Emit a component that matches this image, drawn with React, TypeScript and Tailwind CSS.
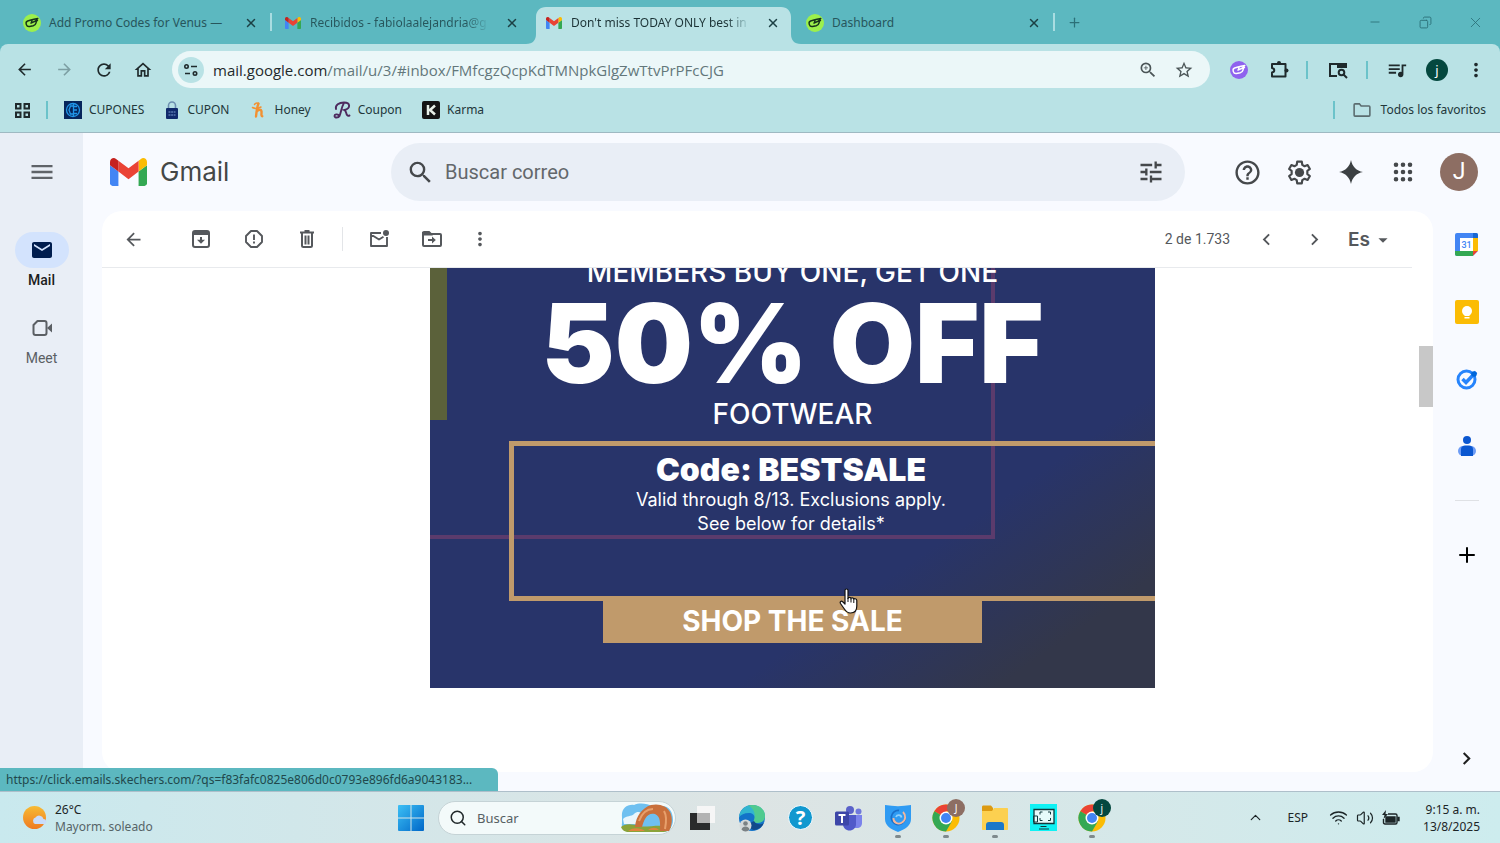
import type { ReactNode } from 'react';
import {
  MdArrowBack, MdArrowDropDown, MdArrowForward, MdChevronLeft, MdChevronRight,
  MdHelpOutline, MdMail, MdMenu, MdMoreVert, MdOutlineHome,
  MdQueueMusic, MdRefresh, MdSearch, MdStarOutline, MdTune, MdZoomIn,
} from 'react-icons/md';
import { ChevronUp, Copy, Minus, Plus, Search, Volume2, Wifi, X } from 'lucide-react';

function GmailLogo({ className }: { className?: string }) {
  return (
    <svg viewBox="52 42 88 66" className={className}>
      <path fill="#4285f4" d="M58 108h14V74L52 59v43c0 3.32 2.69 6 6 6" />
      <path fill="#34a853" d="M120 108h14c3.32 0 6-2.69 6-6V59l-20 15" />
      <path fill="#fbbc04" d="M120 48v26l20-15v-8c0-7.42-8.47-11.65-14.4-7.2" />
      <path fill="#ea4335" d="M72 74V48l24 18 24-18v26L96 92" />
      <path fill="#c5221f" d="M52 51v8l20 15V48l-5.6-4.2c-5.94-4.45-14.4-.22-14.4 7.2" />
    </svg>
  );
}

function HandTag({ bg, ink }: { bg: string; ink: string }) {
  return (
    <svg viewBox="0 0 18 18" className="size-[18px] shrink-0" fill="none">
      <circle cx="9" cy="9" r="9" fill={bg} />
      <path
        d="M8 6 4.600 7C3.200 7.500 2.800 9 3.300 10.500c.5 1.500 1.800 2.300 3.300 2l3.600-.7c1.500-.4 2.500-1.500 2.800-2.800l.5-2M8 6l3-.8 3.800-.7-2.300 2.500-4.500 2.200 1-2.500M13 7l1.500-.5"
        stroke={ink}
        strokeWidth="1.400"
        strokeLinecap="round"
        strokeLinejoin="round"
      />
    </svg>
  );
}

const tabs = [
  { title: 'Add Promo Codes for Venus —', icon: 'tag', divider: true },
  { title: 'Recibidos - fabiolaalejandria@g', icon: 'gmail' },
  { title: "Don't miss TODAY ONLY best in", icon: 'gmail', active: true },
  { title: 'Dashboard', icon: 'tag', divider: true },
];

function TabStrip() {
  return (
    <div className="flex h-[44px] shrink-0 items-stretch bg-[#5cb8c0] pl-[11px]">
      {tabs.map((tab) => (
        <div key={tab.title} className="relative flex w-[261px] shrink-0 items-center px-[3px] pt-[7px]">
          {tab.active && (
            <svg viewBox="0 0 275 37" className="absolute bottom-0 -left-[7px] h-[37px] w-[275px]">
              <path d="M0 37c7 0 10-4 10-10V10C10 4 14 0 20 0h235c6 0 10 4 10 10v17c0 6 3 10 10 10Z" fill="#b9e2e5" />
            </svg>
          )}
          <button className="relative flex min-w-0 flex-1 items-center gap-2 pb-[5px] pl-[9px] text-left">
            {tab.icon === 'gmail' ? (
              <GmailLogo className="h-3 w-[18px] shrink-0" />
            ) : (
              <HandTag bg="#9cf04c" ink="#16331b" />
            )}
            <span
              className={
                tab.active
                  ? 'bg-linear-to-r from-[#1c3336] from-88% to-[#9fcdd1] bg-clip-text text-[12px] leading-5 whitespace-nowrap text-transparent'
                  : tab.icon === 'gmail'
                    ? 'bg-linear-to-r from-[#27565c] from-88% to-[#57aeb6] bg-clip-text text-[12px] leading-5 whitespace-nowrap text-transparent'
                    : 'text-[12px] leading-5 whitespace-nowrap text-[#27565c]'
              }
            >
              {tab.title}
            </span>
          </button>
          <button aria-label="Cerrar" className="relative mr-[11px] mb-[5px] text-[#1c4045]">
            <X className="size-[14px]" strokeWidth={2.500} />
          </button>
          {tab.divider && <span className="absolute right-0 bottom-[13px] h-[18px] w-[2px] bg-[#a9dde1]" />}
        </div>
      ))}
      <button aria-label="Nueva pestaña" className="ml-3 text-[#2c7078]">
        <Plus className="size-[15px]" />
      </button>
      <div className="ml-auto flex items-center text-[#2c7078]">
        <button aria-label="Minimizar" className="flex w-[50px] justify-center"><Minus className="size-[14px]" strokeWidth={1.500} /></button>
        <button aria-label="Restaurar" className="flex w-[50px] justify-center">
          <Copy className="size-[13px] -scale-x-100" strokeWidth={1.700} />
        </button>
        <button aria-label="Cerrar ventana" className="flex w-[50px] justify-center"><X className="size-[17px]" strokeWidth={1.200} /></button>
      </div>
    </div>
  );
}

function BarDivider() {
  return <span className="h-[18px] w-[2px] bg-[#6cc3ca]" />;
}

function AddressBar() {
  return (
    <div className="flex h-[37px] items-center pr-[13px] text-[#1f2a2c]">
      <div className="flex w-[163px] items-center pl-[5px]">
        <button aria-label="Atrás" className="flex flex-1 justify-center"><MdArrowBack className="size-[19px]" /></button>
        <button aria-label="Adelante" className="flex flex-1 justify-center text-[#7d9fa3]"><MdArrowForward className="size-[19px]" /></button>
        <button aria-label="Recargar" className="flex flex-1 justify-center"><MdRefresh className="size-5" /></button>
        <button aria-label="Inicio" className="flex flex-1 justify-center"><MdOutlineHome className="size-5" /></button>
      </div>
      <div className="ml-[9px] flex h-full min-w-0 flex-1 items-center rounded-full bg-[#ebf7f8] pr-[16px] pl-[6px]">
        <span className="flex size-[26px] shrink-0 items-center justify-center rounded-full bg-[#b9e2e5]">
          <svg viewBox="0 0 14 12" className="h-3 w-[14px]" fill="none" stroke="#1f2a2c" strokeWidth="1.600">
            <circle cx="2.500" cy="2.500" r="1.700" />
            <path d="M7 2.500h6M1 9.500h5" />
            <circle cx="11" cy="9.500" r="1.700" />
          </svg>
        </span>
        <a href="#inbox" className="ml-[9px] min-w-0 flex-1 truncate font-['Open_Sans',sans-serif] text-[15px] leading-5 text-[#63777b]">
          <span className="text-[#1f2a2c]">mail.google.com</span>/mail/u/3/#inbox/FMfcgzQcpKdTMNpkGlgZwTtvPrPFcCJG
        </a>
        <button aria-label="Zoom" className="mr-[16px] text-[#4b5557]"><MdZoomIn className="size-5" /></button>
        <button aria-label="Favorito" className="text-[#4b5557]"><MdStarOutline className="size-5" /></button>
      </div>
      <div className="ml-5 flex items-center">
        <button aria-label="Extensión de cupones"><HandTag bg="#8f63ee" ink="#ffffff" /></button>
        <button aria-label="Extensiones" className="mr-[17px] ml-[21px]">
          <svg viewBox="0 0 20 20" className="size-5" fill="none" stroke="#1f2a2c" strokeWidth="2">
            <path d="M3 4h13.500v12.500H3v-4c3-.5 3-4 0-4.500Z" strokeLinejoin="round" />
            <circle cx="10" cy="3" r="2" fill="#1f2a2c" stroke="none" />
            <circle cx="17.500" cy="10.500" r="2" fill="#1f2a2c" stroke="none" />
          </svg>
        </button>
        <BarDivider />
        <button aria-label="Buscar en la página" className="mr-[18px] ml-5">
          <svg viewBox="0 0 20 18" className="h-[18px] w-5" fill="none" stroke="#1f2a2c" strokeWidth="2">
            <path d="M9 15H2V3h16v3M10 3v3h9" />
            <path d="M10 2h9v5h-9z" fill="#1f2a2c" stroke="none" />
            <circle cx="13.500" cy="11.500" r="2.800" />
            <path d="m15.500 13.500 3.500 3.500" />
          </svg>
        </button>
        <BarDivider />
        <button aria-label="Control multimedia" className="mr-[18px] ml-[18px]"><MdQueueMusic className="size-[22px]" /></button>
        <button className="size-[22px] rounded-full bg-[#04483f] text-[13px] leading-5 text-white">j</button>
        <button aria-label="Menú" className="ml-[17px]"><MdMoreVert className="size-[22px]" /></button>
      </div>
    </div>
  );
}

function Bookmark({ label, children, className }: { label: string; children: ReactNode; className?: string }) {
  return (
    <a href="#bookmark" className={`flex shrink-0 items-center gap-[7px] ${className ?? ''}`}>
      {children}
      <span>{label}</span>
    </a>
  );
}

function BookmarksBar() {
  return (
    <div className="flex h-[45px] items-center border-b border-[#9fb9c2] pr-[14px] pl-[14px] text-[12px] leading-5 text-[#22373a]">
      <button aria-label="Aplicaciones">
        <svg viewBox="0 0 17 17" className="size-[17px]" fill="none" stroke="#1f2a2c" strokeWidth="2">
          <path d="M2 2h4.500v4.500H2zM10.500 2H15v4.500h-4.500zM2 10.500h4.500V15H2zM10.500 10.500H15V15h-4.500z" />
        </svg>
      </button>
      <span className="mr-4 ml-[15px] flex"><BarDivider /></span>
      <Bookmark label="CUPONES">
        <svg viewBox="0 0 18 18" className="size-[18px]" fill="none" stroke="#2196e8" strokeWidth="1.300">
          <path d="M0 0h18v18H0z" fill="#06265c" stroke="none" />
          <circle cx="9" cy="9" r="6.500" />
          <path d="M9 5H6.500L5 9l1.500 4H9M9.500 3v12M9.500 5.500H13M9.500 9H13M9.500 12.500H13" />
        </svg>
      </Bookmark>
      <Bookmark label="CUPON" className="ml-5">
        <svg viewBox="0 0 14 18" className="h-[18px] w-4">
          <path d="M3.500 8V4.500a3.500 3.500 0 0 1 7 0V8" fill="none" stroke="#6d8fb0" strokeWidth="1.600" />
          <rect x="1" y="7" width="12" height="11" rx="1" fill="#10296b" />
          <path d="M3.500 11h7M3.500 14h7" stroke="#7b9bd0" strokeWidth="1.200" strokeDasharray="2 .6" />
        </svg>
      </Bookmark>
      <Bookmark label="Honey" className="ml-[21px]">
        <svg viewBox="0 0 16 18" className="h-[18px] w-[17px]" fill="none" stroke="#f29132" strokeLinecap="round" strokeLinejoin="round">
          <path d="M8 2.500C6.500 6 6 10.500 5.500 15.500M6 11c1.500-2.500 4.500-3 5-.8.300 1.800-.8 4.800.8 5" strokeWidth="2.400" />
          <path d="M2 6.500c2.500 1.500 6 .8 8.500-.5M4 3.500C5 2 6.500 1.800 8 2.500" strokeWidth="1.500" />
        </svg>
      </Bookmark>
      <Bookmark label="Coupon" className="ml-[22px]">
        <svg viewBox="0 0 18 18" className="size-[18px]" fill="none" stroke="#4d2a5e" strokeWidth="1.900" strokeLinecap="round">
          <path d="M3 8C2 4 6 1.500 11 1.500c6.500 0 7 6 .5 7.500 2.500 1 1 7 5 5.500M10.500 3C8.500 6 8 12 6.500 15c-1 2-5 2-5 0s3-2 4-1" />
        </svg>
      </Bookmark>
      <Bookmark label="Karma" className="ml-5">
        <svg viewBox="0 0 18 18" className="size-[18px]">
          <rect width="18" height="18" rx="2" fill="#151515" />
          <path d="M6 4v10M13 4.500 8 9l5 4.500" fill="none" stroke="#e8f0e8" strokeWidth="2.500" />
        </svg>
      </Bookmark>
      <span className="mr-[18px] ml-auto flex"><BarDivider /></span>
      <Bookmark label="Todos los favoritos">
        <svg viewBox="0 0 20 16" className="mr-[3px] h-[14px] w-[18px]" fill="none" stroke="#5b6c6f" strokeWidth="1.800">
          <path d="M1 14V2c0-.6.400-1 1-1h5l2 2.500h9c.6 0 1 .4 1 1V14c0 .6-.4 1-1 1H2c-.6 0-1-.4-1-1Z" />
        </svg>
      </Bookmark>
    </div>
  );
}

function SideNav() {
  return (
    <nav className="flex w-[83px] shrink-0 flex-col items-center bg-[#e9eef6] font-['Roboto',sans-serif] text-[14px] leading-4">
      <button aria-label="Menú principal" className="mt-[25px] text-[#5f6368]"><MdMenu className="size-[28px]" /></button>
      <a href="#mail" className="mt-[46px] flex flex-col items-center gap-1 font-medium text-[#1b1d21]">
        <span className="flex h-9 w-[54px] items-center justify-center rounded-full bg-[#d3e3fd] text-[#001d4e]">
          <MdMail className="size-6" />
        </span>
        Mail
      </a>
      <a href="#meet" className="mt-[28px] flex flex-col items-center gap-[10px] text-[#5b5f64]">
        <svg viewBox="0 0 22 24" className="h-6 w-[22px]" fill="none" stroke="#5b5f64" strokeWidth="2">
          <path d="M6.500 5h7c1.200 0 2 .8 2 2v10c0 1.200-.8 2-2 2h-9c-1.200 0-2-.8-2-2V9Z" strokeLinejoin="round" />
          <path d="m16 12 5-4.500v9Z" fill="#5b5f64" stroke="none" />
        </svg>
        Meet
      </a>
    </nav>
  );
}

function MailHeader() {
  return (
    <header className="flex h-[78px] shrink-0 items-center pr-[22px] pl-[27px] font-['Roboto',sans-serif] text-[#45484b]">
      <a href="#inbox" className="flex w-[281px] items-center gap-[13px]">
        <GmailLogo className="h-[28px] w-[37px]" />
        <span className="font-['Inter',sans-serif] text-[26px] leading-8 text-[#444746]">Gmail</span>
      </a>
      <form className="flex h-[58px] min-w-0 flex-1 items-center rounded-full bg-[#e9eef6] pr-5 pl-[15px]">
        <button type="button" aria-label="Buscar"><MdSearch className="size-[29px]" /></button>
        <input
          aria-label="Buscar correo"
          placeholder="Buscar correo"
          className="ml-[10px] min-w-0 flex-1 bg-transparent text-[20px] leading-7 outline-none placeholder:text-[#63676b]"
        />
        <button type="button" aria-label="Opciones de búsqueda"><MdTune className="size-[28px]" /></button>
      </form>
      <div className="ml-[36px] flex items-center">
        <button aria-label="Ayuda" className="flex w-[52px] justify-center"><MdHelpOutline className="size-[29px]" /></button>
        <button aria-label="Configuración" className="flex w-[52px] justify-center">
          <svg viewBox="0 0 24 24" className="size-[29px]" fill="none" stroke="currentColor" strokeWidth="1.800" strokeLinejoin="round">
            <path d="M10.100 3h3.800l.4 2.700 1.900 1.100 2.500-1 1.900 3.300-2.100 1.600v2.600l2.100 1.600-1.900 3.300-2.500-1-1.900 1.100-.4 2.700h-3.800l-.4-2.700-1.900-1.100-2.500 1-1.900-3.300 2.100-1.600v-2.600L3.400 9.100l1.900-3.300 2.500 1 1.900-1.100Z" />
            <circle cx="12" cy="12" r="3.800" fill="currentColor" stroke="none" />
          </svg>
        </button>
        <button aria-label="Gemini" className="flex w-[52px] justify-center">
          <svg viewBox="0 0 24 24" className="size-6" fill="#3c4043">
            <path d="M12 0c1.200 6.500 5.500 10.800 12 12-6.500 1.200-10.800 5.500-12 12-1.200-6.500-5.500-10.800-12-12C6.500 10.800 10.800 6.500 12 0Z" />
          </svg>
        </button>
        <button aria-label="Aplicaciones de Google" className="flex w-[52px] justify-center">
          <svg viewBox="0 0 20 20" className="size-5" fill="currentColor">
            <path d="M3 0.500a2.300 2.300 0 1 1 0 4.600 2.300 2.300 0 0 1 0-4.600Zm7 0a2.300 2.300 0 1 1 0 4.600 2.300 2.300 0 0 1 0-4.600Zm7 0a2.300 2.300 0 1 1 0 4.600 2.300 2.300 0 0 1 0-4.600ZM3 7.700a2.300 2.300 0 1 1 0 4.600 2.300 2.300 0 0 1 0-4.600Zm7 0a2.300 2.300 0 1 1 0 4.600 2.300 2.300 0 0 1 0-4.600Zm7 0a2.300 2.300 0 1 1 0 4.600 2.300 2.300 0 0 1 0-4.600ZM3 14.900a2.300 2.300 0 1 1 0 4.600 2.300 2.300 0 0 1 0-4.600Zm7 0a2.300 2.300 0 1 1 0 4.600 2.300 2.300 0 0 1 0-4.600Zm7 0a2.300 2.300 0 1 1 0 4.600 2.300 2.300 0 0 1 0-4.600Z" />
          </svg>
        </button>
        <button className="ml-[11px] size-[38px] rounded-full bg-[#8d6e63] text-[23px] leading-[38px] text-white">J</button>
      </div>
    </header>
  );
}

function ToolButton({ label, children }: { label: string; children: ReactNode }) {
  return (
    <button aria-label={label} className="flex w-[53px] shrink-0 justify-center">
      {children}
    </button>
  );
}

function MessageToolbar() {
  return (
    <div className="mr-[21px] flex h-[57px] shrink-0 items-center border-b border-[#e8eaed] pl-[5px] font-['Roboto',sans-serif] text-[#55585c]">
      <ToolButton label="Volver"><MdArrowBack className="size-[21px]" /></ToolButton>
      <span className="w-[14px]" />
      <ToolButton label="Archivar">
        <svg viewBox="0 0 18 18" className="size-[18px]" fill="none" stroke="currentColor" strokeWidth="2">
          <rect x="1" y="1" width="16" height="16" rx="2" />
          <path d="M1 1.500h16v3.500H1z" fill="currentColor" stroke="none" />
          <path d="M9 7v5" />
          <path d="M5 9.800h8l-4 4z" fill="currentColor" stroke="none" />
        </svg>
      </ToolButton>
      <ToolButton label="Marcar como spam">
        <svg viewBox="0 0 18 18" className="size-[18px]" fill="none" stroke="currentColor" strokeWidth="1.900">
          <path d="M6 1h6l5 5v6l-5 5H6l-5-5V6Z" strokeLinejoin="round" />
          <path d="M9 4.500V10M9 11.500v2" />
        </svg>
      </ToolButton>
      <ToolButton label="Eliminar">
        <svg viewBox="0 0 16 18" className="h-[18px] w-4" fill="none" stroke="currentColor" strokeWidth="2">
          <path d="M1 2.500h14M5.500 1h5M3 3v12.500c0 .8.500 1.500 1.500 1.500h7c1 0 1.500-.7 1.500-1.500V3M6.500 5.500v9M9.500 5.500v9" />
        </svg>
      </ToolButton>
      <span className="mx-[9px] h-6 w-px bg-[#e3e5e8]" />
      <ToolButton label="Marcar como no leído">
        <svg viewBox="0 0 20 18" className="h-[18px] w-5" fill="none" stroke="currentColor" strokeWidth="1.900">
          <path d="M12 3H2v13h16V7M2 4.500l8 5 4.500-2.800" strokeLinejoin="round" />
          <circle cx="17" cy="3" r="3" fill="currentColor" stroke="none" />
        </svg>
      </ToolButton>
      <ToolButton label="Mover a">
        <svg viewBox="0 0 20 16" className="h-4 w-5" fill="none" stroke="currentColor" strokeWidth="2">
          <path d="M1 14V2c0-.6.400-1 1-1h5l2 2h9c.6 0 1 .4 1 1v10c0 .6-.4 1-1 1H2c-.6 0-1-.4-1-1Z" />
          <path d="M1 2h6l1.500 1.500H1z" fill="currentColor" />
          <path d="M6 9h5" />
          <path d="M10 5.500v7l3.800-3.500z" fill="currentColor" stroke="none" />
        </svg>
      </ToolButton>
      <button aria-label="Más" className="flex w-11 justify-center"><MdMoreVert className="size-[22px]" /></button>
      <span className="ml-auto text-[14px] leading-5">2 de 1.733</span>
      <button aria-label="Más reciente" className="ml-[25px]"><MdChevronLeft className="size-[23px]" /></button>
      <button aria-label="Anterior" className="ml-[25px]"><MdChevronRight className="size-[23px]" /></button>
      <button className="ml-[22px] flex items-center gap-[2px] pt-[2px] font-['Inter',sans-serif] text-[19px] leading-6 font-semibold">
        Es
        <MdArrowDropDown className="size-[22px]" />
      </button>
      <span className="w-[18px]" />
    </div>
  );
}

function HandCursor() {
  return (
    <svg viewBox="0 0 20 26" className="absolute top-[320px] left-[409px] h-[26px] w-5">
      <path
        d="M6 2.500C6 .5 9 .5 9 2.500v8c0-1.500 3-1.500 3 .3 0-1.500 2.800-1.300 2.800.7 0-1.300 3-1 3 1V18c0 4-2 7-6.300 7-3.500 0-5-2-6.500-4.500L1.500 15.500c-1-2 .8-3 2.200-1.700L6 16Z"
        fill="#fff"
        stroke="#111"
        strokeWidth="1.200"
        strokeLinejoin="round"
      />
      <path d="M9 10v4M12 11v3.500M14.800 12v3" stroke="#111" strokeWidth="1" />
    </svg>
  );
}

function PromoBanner() {
  return (
    <div className="relative flex h-[420px] w-[725px] flex-col overflow-hidden bg-[#28346a] bg-linear-[145deg,#28346a_0%,#28346a_68%,#33374a_88%] font-['Inter',sans-serif] text-white">
      <svg viewBox="0 0 725 420" className="absolute inset-0 size-full" fill="none">
        <path d="M0 0h17v152H0z" fill="#5b613a" />
        <path d="M563 0v269H0" stroke="#5b3b6c" strokeWidth="4" />
      </svg>
      <div className="relative -mt-[14px] text-center text-[28px] leading-9 font-medium">MEMBERS BUY ONE, GET ONE</div>
      <div className="relative text-center text-[110px] leading-[106px] font-black">50% OFF</div>
      <div className="relative text-center text-[28px] leading-9 font-medium">FOOTWEAR</div>
      <div className="relative mt-[9px] ml-[79px] h-[160px] border-y-[5px] border-l-[5px] border-[#c09a6b] pt-[6px] pr-[87px] text-center text-[18px] leading-6">
        <p className="text-[32px] leading-9 font-black">Code: BESTSALE</p>
        <p>Valid through 8/13. Exclusions apply.</p>
        <p>See below for details*</p>
      </div>
      <a
        href="#sale"
        className="relative flex h-[42px] w-[379px] items-center justify-center self-center bg-[#c09a6b] pb-[2px] text-[28px] leading-8 font-bold"
      >
        SHOP THE SALE
      </a>
      <HandCursor />
    </div>
  );
}

function SidePanel() {
  return (
    <aside className="flex w-[67px] shrink-0 flex-col items-center pb-[20px]">
      <button aria-label="Calendar" className="flex h-[67px] items-center">
        <svg viewBox="0 0 23 23" className="size-[23px]">
          <rect width="23" height="23" rx="2" fill="#4285f4" />
          <path d="M18 5h5v13h-5z" fill="#fbbc04" />
          <path d="M18 0h3a2 2 0 0 1 2 2v3h-5z" fill="#1967d2" />
          <path d="M0 18h18v5H2a2 2 0 0 1-2-2z" fill="#34a853" />
          <path d="M18 18h5l-5 5z" fill="#ea4335" />
          <path d="M23 18v5h-5z" fill="#f8faff" />
          <path d="M5 5h13v13H5z" fill="#fff" />
          <text x="11.500" y="15" textAnchor="middle" fontSize="9" fontFamily="Roboto" fontWeight="500" fill="#4285f4">31</text>
        </svg>
      </button>
      <button aria-label="Keep" className="flex h-[67px] items-center">
        <svg viewBox="0 0 24 24" className="size-6">
          <rect width="24" height="24" rx="2" fill="#fbbc04" />
          <circle cx="12" cy="11" r="5" fill="#fff" />
          <path d="M9.500 14h5v2h-5zM9.500 17h5v1.500h-5z" fill="#fff" />
        </svg>
      </button>
      <button aria-label="Tasks" className="flex h-[67px] items-center">
        <svg viewBox="0 0 22 22" className="size-[22px]" fill="none">
          <circle cx="10.500" cy="11.500" r="8.500" stroke="#2684fc" strokeWidth="3" />
          <path d="m6.500 11 3.500 3.500L20 4" stroke="#2684fc" strokeWidth="3.500" />
          <circle cx="18" cy="6" r="2.800" fill="#0066da" />
        </svg>
      </button>
      <button aria-label="Contactos" className="flex h-[67px] items-center">
        <svg viewBox="0 0 18 20" className="h-5 w-[18px]">
          <circle cx="9" cy="4" r="4" fill="#0b57d0" />
          <rect x="0" y="10" width="18" height="10" rx="5" fill="#6d9cf5" />
          <path d="M3 13c0-2 2-3.500 4-3.500h4c2 0 4 1.500 4 3.500v7H3z" fill="#0b57d0" />
        </svg>
      </button>
      <span className="mt-[21px] h-px w-6 bg-[#dfe1e5]" />
      <button aria-label="Obtener complementos" className="mt-[42px]"><Plus className="size-[24px] text-black" /></button>
      <button aria-label="Ocultar panel" className="mt-auto text-[#1f1f1f]"><MdChevronRight className="size-[25px]" /></button>
    </aside>
  );
}

function ChromeApp({ badge, tone }: { badge: string; tone: 'brown' | 'green' }) {
  return (
    <span className="relative">
      <svg viewBox="0 0 28 28" className="size-7">
        <circle cx="14" cy="14" r="13.500" fill="#fbbc04" />
        <path d="M14 14 2.300 7.250A13.500 13.500 0 0 1 25.700 7.250H14Z" fill="#ea4335" />
        <path d="M14 14 2.300 7.250A13.500 13.500 0 0 0 14 27.500l5.800-10Z" fill="#34a853" />
        <circle cx="14" cy="14" r="6.500" fill="#fff" />
        <circle cx="14" cy="14" r="5" fill="#4285f4" />
      </svg>
      <span
        className={
          tone === 'brown'
            ? 'absolute -top-[5px] -right-[5px] flex size-[18px] items-center justify-center rounded-full bg-[#8d6e63] text-[10px] leading-4 text-white'
            : 'absolute -top-[5px] -right-[5px] flex size-[18px] items-center justify-center rounded-full bg-[#04483f] text-[10px] leading-4 text-white'
        }
      >
        {badge}
      </span>
    </span>
  );
}

function TaskApp({ label, running, children }: { label: string; running?: boolean; children: ReactNode }) {
  return (
    <button aria-label={label} className="relative flex h-full flex-1 items-center justify-center">
      {children}
      {running && <span className="absolute bottom-[5px] h-[3px] w-[6px] rounded-full bg-[#7f8a8d]" />}
    </button>
  );
}

function Taskbar() {
  return (
    <footer className="grid h-[52px] shrink-0 grid-cols-[1fr_auto_1fr] items-center border-t border-[#aebfca] bg-linear-to-r from-[#c9e9ee] via-[#dde4e4] to-[#cdecee]">
      <button className="ml-[22px] flex items-center gap-[7px] text-left text-[12px] leading-[17px] text-[#1c2527]">
        <svg viewBox="0 0 26 26" className="size-[26px]">
          <defs>
            <linearGradient id="sun" x1="0" y1="0" x2="0" y2="1">
              <stop offset="0" stopColor="#f7bb33" />
              <stop offset="1" stopColor="#ef7a22" />
            </linearGradient>
          </defs>
          <circle cx="12.500" cy="12.500" r="11.500" fill="url(#sun)" />
          <path d="M13 19a3.500 3.500 0 0 1 .5-6.500 4.500 4.500 0 0 1 8 1.500 2.700 2.700 0 0 1 1.500 5Z" fill="#c9dcfa" />
        </svg>
        <span>
          <span className="block">26°C</span>
          <span className="block text-[#566467]">Mayorm. soleado</span>
        </span>
      </button>

      <div className="ml-[2px] flex h-full items-center">
        <button aria-label="Inicio" className="flex w-[49px] justify-center">
          <svg viewBox="0 0 26 26" className="size-[26px]">
            <defs>
              <linearGradient id="win" x1="0" y1="0" x2="1" y2="1">
                <stop offset="0" stopColor="#3cc0f5" />
                <stop offset="1" stopColor="#0067c8" />
              </linearGradient>
            </defs>
            <path d="M0 1a1 1 0 0 1 1-1h11.500v12.500H0zM13.500 0H25a1 1 0 0 1 1 1v11.500H13.500zM0 13.500h12.500V26H1a1 1 0 0 1-1-1zM13.500 13.500H26V25a1 1 0 0 1-1 1H13.500z" fill="url(#win)" />
          </svg>
        </button>
        <label className="mx-[3px] flex h-[34px] w-[238px] items-center rounded-full border border-[#c5d3d6] bg-[#f3fafa] pl-[10px]">
          <Search className="size-[18px] shrink-0 text-[#20282a]" />
          <input
            placeholder="Buscar"
            aria-label="Buscar en Windows"
            className="ml-[10px] w-[143px] bg-transparent text-[13px] leading-5 outline-none placeholder:text-[#566063]"
          />
          <svg viewBox="0 0 54 30" className="h-[30px] w-[54px]">
            <path d="M2 14C1 6 7 1 14 2c6-3 14-1 18 1h10c7 0 11 6 11 14 0 7-4 12-10 12H10c-6 0-9-4-8-9Z" fill="#6fc0f0" />
            <path d="M3 16c4-4 8-2 11-5s7-2 9 0v10H4Z" fill="#eaf6fc" />
            <path d="M1 24c4-4 12-3 18-1s20-2 32 1c-2 4-5 5-9 5H9c-4 0-7-2-8-5Z" fill="#8aa33a" />
            <path d="M15 24c1-11 7-19 16-22 8-2 16 1 19 7s2 14-1 19h-9c0-8 1-14-5-17-8-2-11 6-13 13Z" fill="#c9703c" />
            <path d="M19 18c3-8 8-12 14-12M44 8c3 5 2 13 1 18" fill="none" stroke="#e8a06c" strokeWidth="2" />
            <path d="M8 28c6-4 12-3 17 0ZM28 27c4-3 8-3 11 0Z" fill="#e0843e" />
          </svg>
        </label>
        <div className="flex h-full w-[437px]">
          <TaskApp label="Vista de tareas">
            <svg viewBox="0 0 26 26" className="size-[26px]">
              <path d="M7 1h18v17H7z" fill="#f6f6f6" />
              <path d="M0 8h20v17H0z" fill="#2a2b2c" />
              <path d="M7 8h13v10H7z" fill="#b3b3b3" />
            </svg>
          </TaskApp>
          <TaskApp label="Edge">
            <svg viewBox="0 0 28 28" className="size-7">
              <circle cx="14" cy="14" r="13" fill="#1373c9" />
              <path d="M1 13C2 5 8 1 14 1c8 0 13 5 13 11 0 5-4 7-8 7-3 0-4-1-3-3 2-4-1-7-5-7-5 0-8 2-10 4Z" fill="#32b5cf" />
              <path d="M14 1c8 0 13 5 13 11 0 5-4 7-8 7-3 0-4-1-3-3 2-5 0-12-6-14.500Z" fill="#5bd27a" opacity=".75" />
              <path d="M16 17c2 4 7 4 10 2-2 4-6 7-10 7-5-1-6-7 0-9Z" fill="#114a8b" />
              <circle cx="7.500" cy="21.500" r="6" fill="#d4d8da" />
              <circle cx="7.500" cy="19.500" r="2.300" fill="#7b8184" />
              <path d="M3.500 25.500c1-4 7-4 8 0-2 2.500-6 2.500-8 0Z" fill="#7b8184" />
            </svg>
          </TaskApp>
          <TaskApp label="Ayuda">
            <span className="flex size-[25px] items-center justify-center rounded-full border border-white bg-[#1198cf] text-[20px] leading-6 font-bold text-white">?</span>
          </TaskApp>
          <TaskApp label="Teams">
            <svg viewBox="0 0 28 26" className="h-[26px] w-7">
              <circle cx="15" cy="5" r="4" fill="#5a62c9" />
              <circle cx="23.500" cy="6.500" r="3" fill="#6f78dc" />
              <path d="M19 10h8v8c0 3-2 5-5 5h-3z" fill="#7b83eb" />
              <path d="M8 10h13v9c0 4-3 6.500-6.500 6.500S8 23 8 19z" fill="#5059c9" />
              <rect x="0" y="6.500" width="14" height="14" rx="1.500" fill="#3d46a8" />
              <path d="M3.500 10h7M7 10v8" stroke="#fff" strokeWidth="2" />
            </svg>
          </TaskApp>
          <TaskApp label="VPN" running>
            <svg viewBox="0 0 26 28" className="h-7 w-[26px]" fill="none">
              <path d="M0 1c9 1.500 17 1.500 26 0v14c0 6-5 10-13 13C5 25 0 21 0 15Z" fill="#2f9bf3" />
              <path d="M14 6.500a7 7 0 1 0 6 9" stroke="#1a6fc9" strokeWidth="1.800" />
              <path d="M18 8c3 3 3 8-1 10.500s-9 0-8.500-4.500" stroke="#f4b79d" strokeWidth="1.800" />
              <path d="M11 13c1-2.500 5-2.500 5.500.5" stroke="#8fd0ff" strokeWidth="1.800" />
            </svg>
          </TaskApp>
          <TaskApp label="Chrome" running><ChromeApp badge="J" tone="brown" /></TaskApp>
          <TaskApp label="Explorador" running>
            <svg viewBox="0 0 28 26" className="h-[26px] w-7">
              <path d="M1 2c0-1 .6-1.500 1.500-1.500H10L12 3v4H1z" fill="#dc9a12" />
              <path d="M1 6h10l2-3h13c.6 0 1 .4 1 1v20c0 .6-.4 1-1 1H2c-.6 0-1-.4-1-1z" fill="#fcd050" />
              <path d="M5 25v-5c0-2 1-3 3-3h12c2 0 3 1 3 3v5z" fill="#1c78c8" />
            </svg>
          </TaskApp>
          <TaskApp label="Captura">
            <svg viewBox="0 0 27 27" className="size-[27px]" fill="none" stroke="#10393c">
              <path d="M0 0h27v27H0z" fill="#0ff2f4" stroke="none" />
              <path d="M4 5.500h20v14H4z" fill="#e6fbfb" strokeWidth="1.300" />
              <path d="M3.500 12h4v6h-4zM10 8h2.500M10 8v2.500M10 16.500h2.500M10 16.500V14M20.500 8H18M20.500 8v2.500M20.500 16.500H18M20.500 16.500V14M10.500 22.500h6M9 25h10" strokeWidth="1" />
            </svg>
          </TaskApp>
          <TaskApp label="Chrome perfil j" running><ChromeApp badge="j" tone="green" /></TaskApp>
        </div>
      </div>

      <div className="flex items-center justify-end pr-5 text-[12px] leading-[17px] text-[#1c2527]">
        <button aria-label="Iconos ocultos"><ChevronUp className="size-[17px]" strokeWidth={1.700} /></button>
        <button className="ml-[23px]">ESP</button>
        <button aria-label="Red, volumen y batería" className="mr-[23px] ml-[21px] flex items-center gap-2">
          <Wifi className="size-[19px]" strokeWidth={1.700} />
          <Volume2 className="size-[18px]" strokeWidth={1.600} />
          <svg viewBox="0 0 18 16" className="h-4 w-[18px]" fill="none" stroke="#1c2527" strokeWidth="1.400">
            <path d="M6 4h7.500c1 0 1.500.5 1.500 1.500v7c0 1-.5 1.500-1.500 1.500H3c-1 0-1.500-.5-1.500-1.500V9" />
            <path d="M4 7h9v5H4zM16 7.500h1v3h-1z" fill="#1c2527" />
            <path d="M4 0 0 5h2.500L1.500 9 6 4H3.500Z" fill="#1c2527" stroke="none" />
          </svg>
        </button>
        <button className="text-right">
          <span className="block">9:15 a. m.</span>
          <span className="block">13/8/2025</span>
        </button>
      </div>
    </footer>
  );
}

export default function App() {
  return (
    <div className="flex h-screen flex-col overflow-hidden bg-[#f8faff] font-['Noto_Sans','Open_Sans',sans-serif]">
      <TabStrip />
      <div className="shrink-0 bg-[#5cb8c0]">
        <div className="rounded-t-lg bg-[#b9e2e5] pt-[7px]">
          <AddressBar />
          <BookmarksBar />
        </div>
      </div>

      <div className="relative flex min-h-0 flex-1">
        <SideNav />
        <div className="flex min-w-0 flex-1 flex-col">
          <MailHeader />
          <div className="flex min-h-0 flex-1">
            <main className="mb-[19px] ml-[19px] flex min-w-0 flex-1 flex-col overflow-hidden rounded-[20px] bg-white">
              <MessageToolbar />
              <div className="flex min-h-0 flex-1">
                <div className="flex min-w-0 flex-1 items-start justify-center pl-[64px]">
                  <PromoBanner />
                </div>
                <div className="w-[14px] pt-[78px]">
                  <div className="h-[61px] bg-[#c8c8c8]" />
                </div>
              </div>
            </main>
            <SidePanel />
          </div>
        </div>
        <div className="absolute bottom-0 left-0 h-[23px] w-[498px] truncate rounded-tr-md bg-[#5cb8c0] pl-[6px] text-[12px] leading-[23px] text-[#21484c]">
          https://click.emails.skechers.com/?qs=f83fafc0825e806d0c0793e896fd6a9043183...
        </div>
      </div>

      <Taskbar />
    </div>
  );
}
